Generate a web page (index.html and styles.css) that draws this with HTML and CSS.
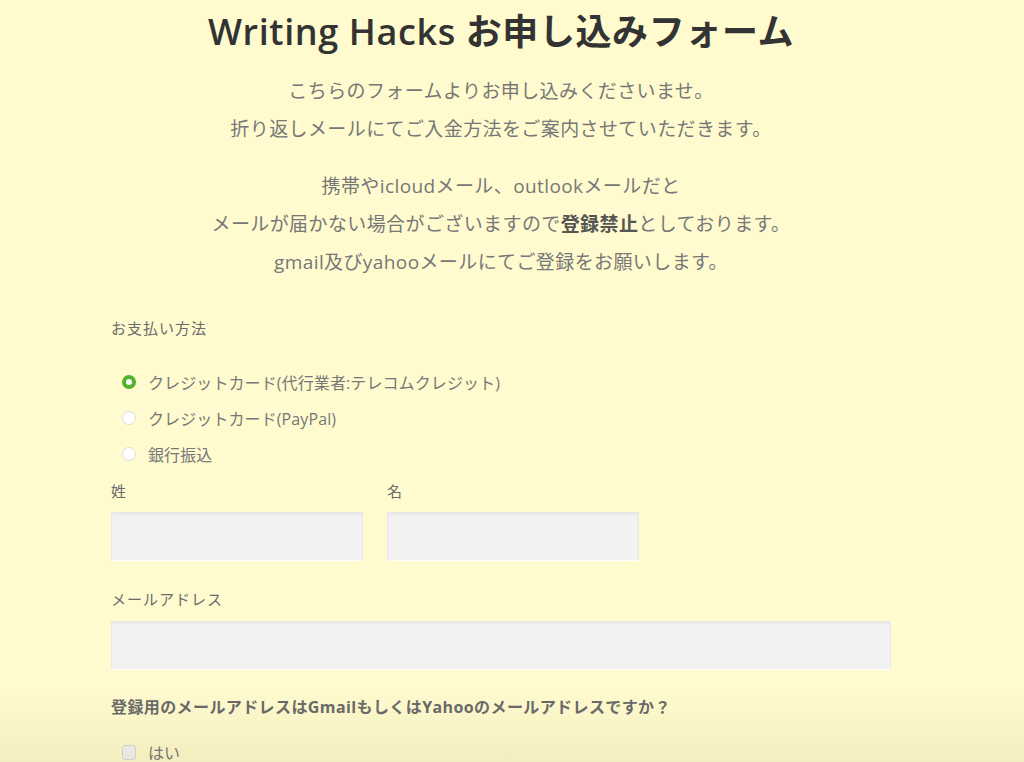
FILE: index.html
```html
<!DOCTYPE html>
<html lang="ja">
<head>
<meta charset="utf-8">
<title>Writing Hacks お申し込みフォーム</title>
<link rel="stylesheet" href="styles.css">
</head>
<body>
<div class="page">
  <h1 class="title">Writing Hacks お申し込みフォーム</h1>
  <div class="intro">
    <p>こちらのフォームよりお申し込みくださいませ。<br>折り返しメールにてご入金方法をご案内させていただきます。</p>
    <p>携帯やicloudメール、outlookメールだと<br>メールが届かない場合がございますので<strong>登録禁止</strong>としております。<br>gmail及びyahooメールにてご登録をお願いします。</p>
  </div>

  <form class="form">
    <div class="field field-pay">
      <div class="label">お支払い方法</div>
      <div class="options">
        <label class="option"><input type="radio" name="pay" class="radio" checked><span>クレジットカード(代行業者:テレコムクレジット)</span></label>
        <label class="option"><input type="radio" name="pay" class="radio"><span>クレジットカード(PayPal)</span></label>
        <label class="option"><input type="radio" name="pay" class="radio"><span>銀行振込</span></label>
      </div>
    </div>

    <div class="name-row">
      <div class="field">
        <div class="label">姓</div>
        <input type="text" class="input">
      </div>
      <div class="field">
        <div class="label">名</div>
        <input type="text" class="input">
      </div>
    </div>

    <div class="field field-mail">
      <div class="label">メールアドレス</div>
      <input type="email" class="input input-wide">
    </div>

    <div class="field field-q">
      <div class="label label-bold">登録用のメールアドレスはGmailもしくはYahooのメールアドレスですか？</div>
      <div class="options options-check">
        <label class="option"><input type="checkbox" class="check"><span>はい</span></label>
      </div>
    </div>
  </form>
</div>
<div class="bottom-shade"></div>
</body>
</html>
```

FILE: styles.css
```css
html, body {
  margin: 0;
  padding: 0;
  background: #fffbcf;
}

body {
  font-family: "Open Sans", "Noto Sans CJK JP", sans-serif;
  color: #777;
  height: 762px;
  overflow: hidden;
}

.page {
  width: 780px;
  margin-left: 111px;
  padding-top: 10px;
}

.title {
  margin: 0;
  text-align: center;
  font-size: 36px;
  line-height: 44px;
  font-weight: 600;
  color: #333;
  letter-spacing: 0.6px;
}

.intro {
  margin-top: 18px;
  text-align: center;
  font-size: 19px;
  line-height: 38px;
  color: #777;
  letter-spacing: 0.4px;
}

.intro p {
  margin: 0 0 19px;
}

.intro p:last-child {
  margin-bottom: 0;
}

.intro strong {
  color: #555;
  font-weight: 700;
}

.form {
  display: flex;
  flex-direction: column;
  margin-top: 35px;
}

.field {
  display: flex;
  flex-direction: column;
}

.label {
  font-size: 15px;
  line-height: 24px;
  color: #6b6b6b;
  letter-spacing: 1px;
}

.label-bold {
  font-size: 16px;
  font-weight: 700;
  letter-spacing: 0.4px;
  color: #6a6a6a;
}

.options {
  display: flex;
  flex-direction: column;
  margin-top: 24px;
}

.options-check {
  margin-top: 15px;
}

.option {
  display: flex;
  align-items: center;
  height: 36px;
  padding-left: 11px;
  font-size: 16px;
  color: #777;
  letter-spacing: 0.1px;
}

.option span {
  margin-left: 12px;
}

.radio {
  appearance: none;
  -webkit-appearance: none;
  margin: 0;
  width: 14px;
  height: 14px;
  border-radius: 50%;
  background: #fff;
  border: 1px solid #dcdcdc;
  box-sizing: border-box;
}

.radio:checked {
  border: 4px solid #52b32a;
  background: #fff;
}

.check {
  appearance: none;
  -webkit-appearance: none;
  margin: 0;
  width: 14px;
  height: 15px;
  border-radius: 3px;
  background: #f2f2f0;
  border: 1px solid #d8d8d4;
  box-sizing: border-box;
}

.name-row {
  display: flex;
  gap: 24px;
  margin-top: 7px;
}

.name-row .field {
  width: 252px;
}

.input {
  margin-top: 9px;
  height: 49px;
  box-sizing: border-box;
  background: #f2f2f2;
  border: 1px solid #e8e8e8;
  border-bottom-color: #fff;
  box-shadow: inset 0 2px 2px rgba(0, 0, 0, 0.04);
  padding: 0 10px;
  font-size: 16px;
  outline: none;
}

.field-mail {
  margin-top: 26px;
}

.input-wide {
  width: 780px;
  margin-top: 10px;
}

.field-q {
  margin-top: 25px;
}

.bottom-shade {
  position: fixed;
  left: 0;
  right: 0;
  bottom: 0;
  height: 75px;
  background: linear-gradient(to bottom, rgba(120, 110, 40, 0), rgba(120, 110, 40, 0.09));
  pointer-events: none;
}
```
